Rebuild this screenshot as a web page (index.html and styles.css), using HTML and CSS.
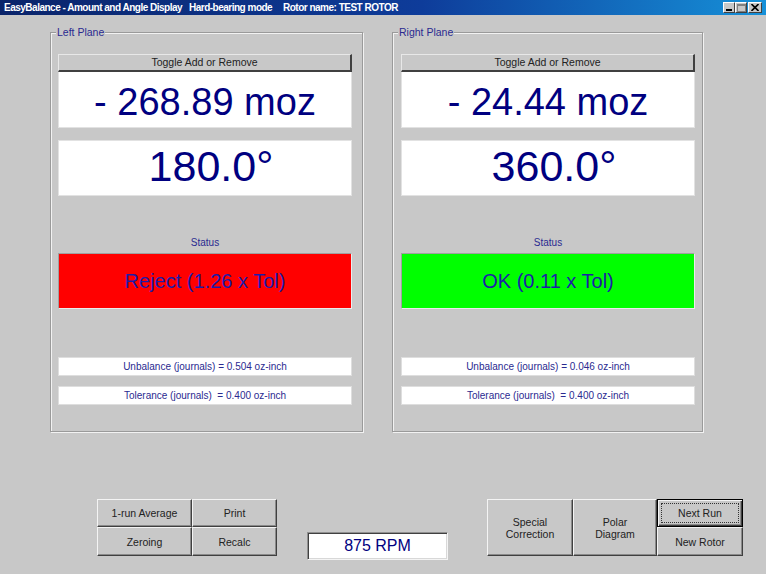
FILE: index.html
```html
<!DOCTYPE html>
<html>
<head>
<meta charset="utf-8">
<link rel="stylesheet" href="styles.css">
</head>
<body>
<div class="titlebar">
  <span class="t1">EasyBalance - Amount and Angle Display</span>
  <span class="t2">Hard-bearing mode</span>
  <span class="t3">Rotor name: TEST ROTOR</span>
  <div class="wbtns">
    <div class="wbtn"><svg width="8" height="7" viewBox="0 0 8 7"><rect x="1" y="5" width="6" height="2" fill="#000"/></svg></div>
    <div class="wbtn"><svg width="9" height="8" viewBox="0 0 9 8"><rect x="0.5" y="0.5" width="8" height="7" fill="none" stroke="#808080"/><rect x="0" y="0" width="9" height="2" fill="#808080"/></svg></div>
    <div class="wbtn close"><svg width="8" height="7" viewBox="0 0 8 7"><path d="M0.5 0 L7.5 7 M7.5 0 L0.5 7" stroke="#000" stroke-width="1.6"/></svg></div>
  </div>
</div>

<div class="main">
  <div class="group left">
    <div class="group-label">Left Plane</div>
    <div class="content">
      <div class="toggle">Toggle Add or Remove</div>
      <div class="amount">- 268.89 moz</div>
      <div class="angle">180.0°</div>
      <div class="status-label">Status</div>
      <div class="status reject">Reject (1.26 x Tol)</div>
      <div class="info first">Unbalance (journals) = 0.504 oz-inch</div>
      <div class="info">Tolerance (journals)&nbsp; = 0.400 oz-inch</div>
    </div>
  </div>
  <div class="group right">
    <div class="group-label">Right Plane</div>
    <div class="content">
      <div class="toggle">Toggle Add or Remove</div>
      <div class="amount">- 24.44 moz</div>
      <div class="angle">360.0°</div>
      <div class="status-label">Status</div>
      <div class="status ok">OK (0.11 x Tol)</div>
      <div class="info first">Unbalance (journals) = 0.046 oz-inch</div>
      <div class="info">Tolerance (journals)&nbsp; = 0.400 oz-inch</div>
    </div>
  </div>
</div>

<div class="bottom">
  <div class="grid2">
    <div class="btn">1-run Average</div>
    <div class="btn">Print</div>
    <div class="btn">Zeroing</div>
    <div class="btn">Recalc</div>
  </div>
  <div class="rpm">875 RPM</div>
  <div class="cluster">
    <div class="btn tall w86">Special<br>Correction</div>
    <div class="btn tall w84">Polar<br>Diagram</div>
    <div class="col">
      <div class="btn focus">Next Run</div>
      <div class="btn">New Rotor</div>
    </div>
  </div>
</div>
</body>
</html>
```

FILE: styles.css
```css
html, body {
  margin: 0;
  padding: 0;
}
body {
  width: 766px;
  height: 574px;
  overflow: hidden;
  background: #c8c8c8;
  font-family: "Liberation Sans", Arial, sans-serif;
}

.titlebar {
  height: 15px;
  background: linear-gradient(to right, #0a246a 0%, #0e3c9a 55%, #1690d8 100%);
  color: #fff;
  font-weight: bold;
  font-size: 10px;
  letter-spacing: -0.5px;
  display: flex;
  align-items: center;
  white-space: nowrap;
}
.t1 { margin-left: 4px; width: 185px; }
.t2 { width: 94px; }
.wbtns {
  margin-left: auto;
  margin-right: 4px;
  display: flex;
  align-items: center;
}
.wbtn {
  width: 12px;
  height: 11px;
  box-sizing: border-box;
  background: #c8c8c8;
  border: 1px solid;
  border-color: #fff #404040 #404040 #fff;
  display: flex;
  align-items: center;
  justify-content: center;
}
.wbtn.close {
  width: 14px;
  margin-left: 1px;
}

.main {
  display: flex;
  padding: 17px 0 0 50px;
  gap: 29px;
}
.group {
  position: relative;
  height: 400px;
  box-sizing: border-box;
  border: 1px solid #9a9a9a;
  box-shadow: inset 1px 1px 0 #f2f2f2, 1px 1px 0 #f2f2f2;
  padding: 21px 0 0 7px;
}
.group.left { width: 313px; }
.group.right { width: 311px; padding-left: 8px; }
.group-label {
  position: absolute;
  top: -7px;
  left: 5px;
  padding: 0 1px;
  background: #c8c8c8;
  color: #2a2a90;
  font-size: 10.5px;
  line-height: 13px;
}

.content {
  width: 294px;
  display: flex;
  flex-direction: column;
}
.toggle {
  height: 18px;
  box-sizing: border-box;
  background: #c8c8c8;
  border-top: 1px solid #e8e8e8;
  border-left: 1px solid #e8e8e8;
  border-right: 2px solid #404040;
  border-bottom: 2px solid #404040;
  font-size: 10.5px;
  color: #222;
  text-align: center;
  line-height: 15px;
}
.amount, .angle {
  height: 56px;
  box-sizing: border-box;
  background: #fff;
  border: 1px solid #e2e2e2;
  color: #000080;
  display: flex;
  align-items: center;
  justify-content: center;
  white-space: nowrap;
}
.amount {
  font-size: 38px;
  border-top: none;
  padding-top: 5px;
}
.angle {
  margin-top: 12px;
  font-size: 43px;
  padding-left: 12px;
  padding-bottom: 3px;
}
.status-label {
  margin-top: 40px;
  height: 14px;
  line-height: 14px;
  margin-bottom: 3px;
  text-align: center;
  font-size: 10px;
  color: #2a2a90;
}
.status {
  height: 56px;
  box-sizing: border-box;
  border: 1px solid;
  border-color: #a0a0a0 #ececec #ececec #a0a0a0;
  display: flex;
  align-items: center;
  justify-content: center;
  font-size: 20px;
  color: #1c1ca8;
}
.status.reject { background: #ff0000; }
.status.ok { background: #00ff00; }

.info {
  height: 19px;
  box-sizing: border-box;
  background: #fff;
  border: 1px solid #dedede;
  font-size: 10px;
  color: #2a2a90;
  text-align: center;
  line-height: 17px;
  margin-top: 10px;
}
.info.first { margin-top: 48px; }

.bottom {
  display: flex;
  padding-left: 97px;
  margin-top: 67px;
}
.grid2 {
  display: grid;
  grid-template-columns: 95px 85px;
  grid-template-rows: 28px 29px;
}
.btn {
  box-sizing: border-box;
  background: #c8c8c8;
  border: 1px solid;
  border-color: #f4f4f4 #404040 #404040 #f4f4f4;
  box-shadow: inset -1px -1px 0 #8a8a8a;
  font-size: 10.5px;
  color: #222;
  display: flex;
  align-items: center;
  justify-content: center;
  text-align: center;
  line-height: 12px;
}
.rpm {
  margin-left: 30px;
  margin-top: 33px;
  width: 141px;
  height: 28px;
  box-sizing: border-box;
  background: #fff;
  border: 1px solid;
  border-color: #909090 #f4f4f4 #f4f4f4 #909090;
  box-shadow: inset 1px 1px 0 #404040, inset -1px -1px 0 #d8d8d8;
  color: #000080;
  font-size: 16px;
  display: flex;
  align-items: center;
  justify-content: center;
}
.cluster {
  margin-left: 39px;
  display: flex;
  height: 57px;
}
.tall { height: 57px; }
.w86 { width: 86px; }
.w84 { width: 84px; }
.col {
  display: grid;
  grid-template-rows: 28px 29px;
  width: 86px;
}
.btn.focus {
  border-color: #000;
  box-shadow: inset 1px 1px 0 #f4f4f4, inset -1px -1px 0 #404040, inset -2px -2px 0 #8a8a8a;
  outline: 1px dotted #333;
  outline-offset: -5px;
}
```
